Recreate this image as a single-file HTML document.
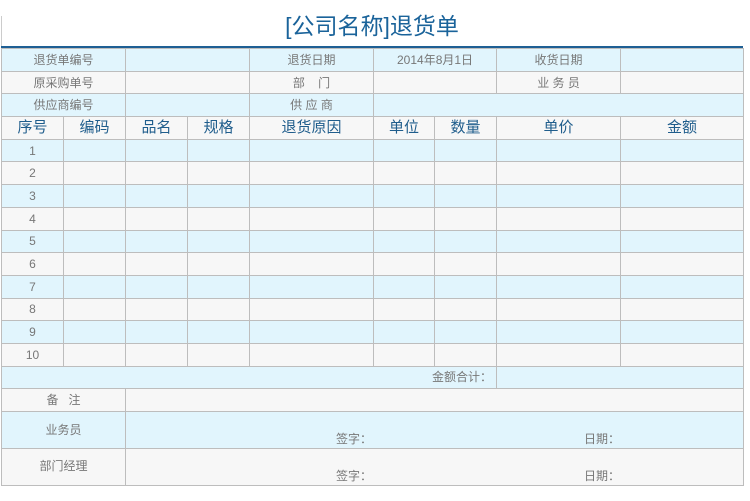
<!DOCTYPE html>
<html><head><meta charset="utf-8"><style>
body{margin:0;width:750px;height:501px;background:#fff;font-family:"Liberation Sans","Noto Sans CJK SC",sans-serif;position:relative;overflow:hidden}
.title{position:absolute;left:0;top:9px;width:744px;text-align:center;font-size:23px;color:#1a639a;line-height:34px}
.lb{position:absolute;left:1px;top:16px;width:1px;height:31px;background:#ccc}
.tl{position:absolute;left:1px;top:46px;width:742px;height:2px;background:#1e5f94}
table{position:absolute;left:1px;top:48px;border-collapse:collapse;table-layout:fixed;width:742px}
td{border:1px solid #bdbdbd;padding:0;text-align:center;font-size:12px;color:#777;height:21.7px;line-height:20px;overflow:hidden;white-space:nowrap}
tr.b td{background:#e1f5fd}
tr.g td{background:#f7f7f7}
tr.h td{font-size:15px;color:#1f5d8c}
.r{text-align:right;padding-right:4px}
td.t{height:36px;position:relative;vertical-align:top}
td.t span{position:absolute}
</style></head><body>
<div class="lb"></div>
<div class="title">[公司名称]退货单</div>
<div class="tl"></div>
<table>
<colgroup><col style="width:62px"><col style="width:62px"><col style="width:62px"><col style="width:62px"><col style="width:124px"><col style="width:61px"><col style="width:62px"><col style="width:124px"><col style="width:123px"></colgroup>
<tr class="b"><td colspan="2">退货单编号</td><td colspan="2"></td><td>退货日期</td><td colspan="2">2014年8月1日</td><td>收货日期</td><td></td></tr>
<tr class="g"><td colspan="2">原采购单号</td><td colspan="2"></td><td>部&nbsp;&nbsp;&nbsp;&nbsp;门</td><td colspan="2"></td><td>业 务 员</td><td></td></tr>
<tr class="b"><td colspan="2">供应商编号</td><td colspan="2"></td><td>供 应 商</td><td colspan="4"></td></tr>
<tr class="g h"><td>序号</td><td>编码</td><td>品名</td><td>规格</td><td>退货原因</td><td>单位</td><td>数量</td><td>单价</td><td>金额</td></tr>
<tr class="b"><td>1</td><td></td><td></td><td></td><td></td><td></td><td></td><td></td><td></td></tr>
<tr class="g"><td>2</td><td></td><td></td><td></td><td></td><td></td><td></td><td></td><td></td></tr>
<tr class="b"><td>3</td><td></td><td></td><td></td><td></td><td></td><td></td><td></td><td></td></tr>
<tr class="g"><td>4</td><td></td><td></td><td></td><td></td><td></td><td></td><td></td><td></td></tr>
<tr class="b"><td>5</td><td></td><td></td><td></td><td></td><td></td><td></td><td></td><td></td></tr>
<tr class="g"><td>6</td><td></td><td></td><td></td><td></td><td></td><td></td><td></td><td></td></tr>
<tr class="b"><td>7</td><td></td><td></td><td></td><td></td><td></td><td></td><td></td><td></td></tr>
<tr class="g"><td>8</td><td></td><td></td><td></td><td></td><td></td><td></td><td></td><td></td></tr>
<tr class="b"><td>9</td><td></td><td></td><td></td><td></td><td></td><td></td><td></td><td></td></tr>
<tr class="g"><td>10</td><td></td><td></td><td></td><td></td><td></td><td></td><td></td><td></td></tr>
<tr class="b"><td colspan="7" class="r">金额合计：</td><td colspan="2"></td></tr>
<tr class="g"><td colspan="2">备&nbsp;&nbsp;&nbsp;注</td><td colspan="7"></td></tr>
<tr class="b"><td colspan="2" class="t"><span style="left:0;right:0;top:8px">业务员</span></td><td colspan="7" class="t"><span style="left:210px;top:17px">签字：</span><span style="left:458px;top:17px">日期：</span></td></tr>
<tr class="g"><td colspan="2" class="t"><span style="left:0;right:0;top:7px">部门经理</span></td><td colspan="7" class="t"><span style="left:210px;top:17px">签字：</span><span style="left:458px;top:17px">日期：</span></td></tr>
</table>
</body></html>
